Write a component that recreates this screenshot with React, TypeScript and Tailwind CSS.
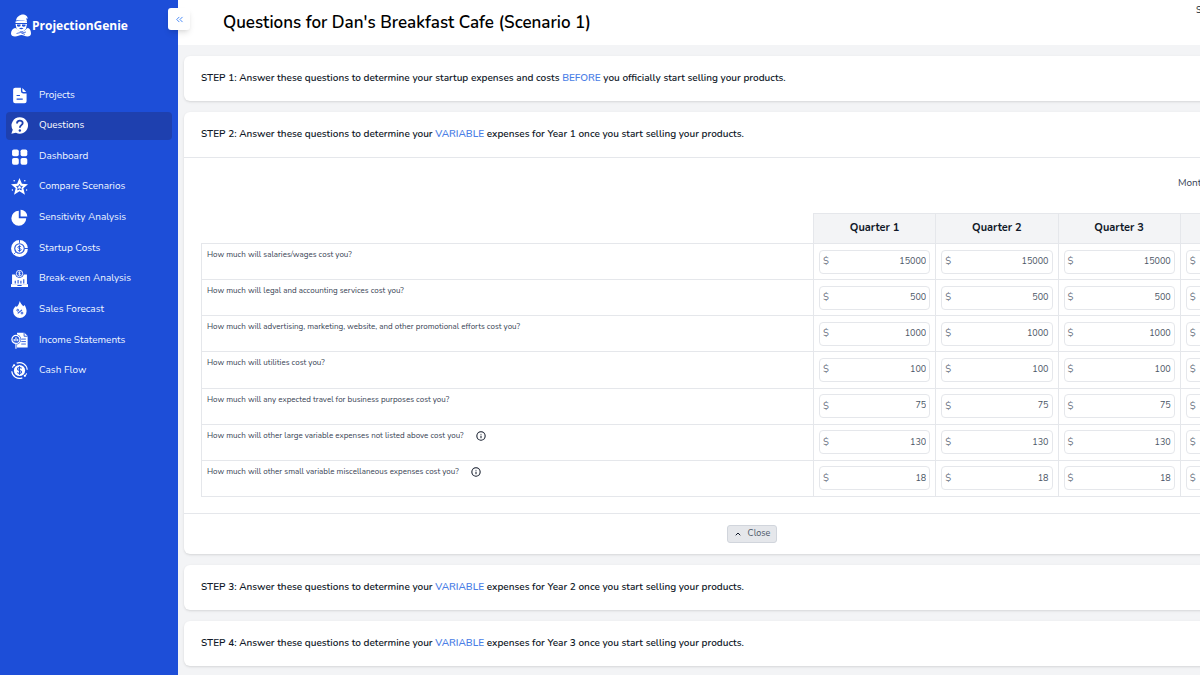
import type { ReactNode } from "react"
import { ChevronUp, ChevronsLeft, Info } from "lucide-react"

const icons: Record<string, ReactNode> = {
  projects: (
    <>
      <path d="M6 1h8v5a3 3 0 0 0 3 3h5v11a3 3 0 0 1-3 3H6a3 3 0 0 1-3-3V4a3 3 0 0 1 3-3z" />
      <path d="M16 1.500l5.500 5.500H17.500A1.500 1.500 0 0 1 16 5.500z" />
      <path d="M8.500 12h3.500M8.500 17h7.500" className="stroke-[#1d4ed8]" strokeWidth="1.700" strokeLinecap="round" />
    </>
  ),
  questions: (
    <>
      <path d="M12.500 0.500a11.500 11.500 0 1 1-5.500 21.600L0.500 23.500 2.500 18A11.500 11.500 0 0 1 12.500 0.500z" />
      <path
        d="M8.500 9c0-5 8-5 8-.5 0 3-4 3-4 6.500"
        className="stroke-[#1e40af]"
        strokeWidth="2.600"
        fill="none"
      />
      <circle cx="12.500" cy="19" r="1.700" className="fill-[#1e40af]" />
    </>
  ),
  dashboard: (
    <>
      <rect x="1.500" y="2" width="9.500" height="9.500" rx="2.500" />
      <rect x="13.500" y="2" width="9.500" height="9.500" rx="2.500" />
      <rect x="1.500" y="14" width="9.500" height="9.500" rx="2.500" />
      <rect x="13.500" y="14" width="9.500" height="9.500" rx="2.500" />
    </>
  ),
  compare: (
    <>
      <path d="M12 0l3.400 8.200 8.600.6-6.600 5.600 2.300 9.100L12 18.700l-7.700 4.800 2.300-9.100L0 8.800l8.600-.6z" />
      <path
        d="M12 9l1.200 2.700 2.900.3-2.200 2 .6 2.900L12 15.400l-2.500 1.500.6-2.900-2.200-2 2.900-.3z"
        className="stroke-[#1d4ed8]"
        strokeWidth="1.300"
        fill="none"
      />
      <circle cx="4.500" cy="4" r="1.100" />
      <circle cx="19.500" cy="4" r="1.100" />
      <circle cx="22" cy="17" r="1" />
      <circle cx="2" cy="17" r="1" />
    </>
  ),
  sensitivity: (
    <>
      <path d="M11 2.500v10.500h10.500A10.500 10.500 0 1 1 11 2.500z" />
      <path d="M13.500 1a9.500 9.500 0 0 1 9.500 9.500h-9.500z" />
    </>
  ),
  startup: (
    <>
      <circle cx="12" cy="12" r="9.700" fill="none" stroke="currentColor" strokeWidth="4.400" />
      <circle cx="12" cy="12" r="5.900" />
      <path d="M12 0v4M19 12h5M4.500 19.500l2-2" className="stroke-[#1d4ed8]" strokeWidth="1.300" />
      <path
        d="M14.300 9.700c-1-1.300-4.600-1.200-4.600.7 0 2.100 4.700 1.100 4.700 3.300 0 1.900-3.700 2-4.800.5M12 7.500v9"
        className="stroke-[#1d4ed8]"
        strokeWidth="1.300"
        fill="none"
      />
    </>
  ),
  breakEven: (
    <>
      <path d="M1.500 6.500h4.500a6.200 6.200 0 0 0 12 0h4.500V20h-21z" />
      <path d="M0 20h24v4H0z" />
      <circle cx="12" cy="5" r="4.500" fill="none" stroke="currentColor" strokeWidth="1.300" />
      <path d="M13.500 3.600c-1-1-3-.7-3 .4 0 1.500 3 .8 3 2.200 0 1-2.200 1.200-3.200.2M12 2v6" fill="none" stroke="currentColor" />
      <path d="M6 19v-4M10 19v-5M14 19v-4M18 19v-6M9 21.800h6" className="stroke-[#1d4ed8]" strokeWidth="1.500" />
    </>
  ),
  sales: (
    <>
      <path d="M12.500 0c1 4 3 5 5 7.500l1.500-2c2 3 3 6 3 9A9.500 9.500 0 0 1 3 14.500c0-4 2-5.500 4-7.500l1 1.500C10.500 6 11.500 3 12.500 0z" />
      <path d="M9.500 17.500l6-5" className="stroke-[#1d4ed8]" strokeWidth="1.500" />
      <circle cx="9.500" cy="13" r="1.300" className="stroke-[#1d4ed8]" fill="none" strokeWidth="1.300" />
      <circle cx="15.500" cy="17" r="1.300" className="stroke-[#1d4ed8]" fill="none" strokeWidth="1.300" />
    </>
  ),
  income: (
    <>
      <path d="M8.500 1h10.500l4.500 4.500V22H8.500z" />
      <path
        d="M18.500 1v5h5M14.500 10H21M14.500 13.500H21M14.500 17H21"
        className="stroke-[#1d4ed8]"
        strokeWidth="1.200"
        fill="none"
      />
      <circle cx="7" cy="10.500" r="7.300" className="fill-[#1d4ed8]" />
      <circle cx="7" cy="10.500" r="5.700" fill="none" stroke="currentColor" strokeWidth="1.800" />
      <path d="M4.500 13v-3M7 13V7.500M9.500 13V9.500M7 16.500v7" stroke="currentColor" strokeWidth="1.600" />
    </>
  ),
  cash: (
    <>
      <circle cx="12" cy="12" r="7.900" />
      <path
        d="M15 8.900c-1.500-1.600-5.800-1.400-5.800 1 0 2.700 5.800 1.400 5.800 4.200 0 2.400-4.600 2.500-6.200.7M12 6v12"
        className="stroke-[#1d4ed8]"
        strokeWidth="1.500"
        fill="none"
      />
      <path
        d="M8 1.600A11 11 0 0 1 22.900 11M16 22.400A11 11 0 0 1 1.100 13M2 8a11 11 0 0 1 2.500-4M22 16a11 11 0 0 1-2.500 4"
        fill="none"
        stroke="currentColor"
        strokeWidth="1.600"
      />
      <circle cx="4.500" cy="4.500" r="1.500" />
      <circle cx="19.500" cy="19.500" r="1.500" />
    </>
  ),
}

const navItems = [
  { name: "Projects", icon: "projects" },
  { name: "Questions", icon: "questions", active: true },
  { name: "Dashboard", icon: "dashboard" },
  { name: "Compare Scenarios", icon: "compare" },
  { name: "Sensitivity Analysis", icon: "sensitivity" },
  { name: "Startup Costs", icon: "startup" },
  { name: "Break-even Analysis", icon: "breakEven" },
  { name: "Sales Forecast", icon: "sales" },
  { name: "Income Statements", icon: "income" },
  { name: "Cash Flow", icon: "cash" },
]

const quarters = ["Quarter 1", "Quarter 2", "Quarter 3", "Quarter 4"]

const questions = [
  { text: "How much will salaries/wages cost you?", value: 15000 },
  { text: "How much will legal and accounting services cost you?", value: 500 },
  { text: "How much will advertising, marketing, website, and other promotional efforts cost you?", value: 1000 },
  { text: "How much will utilities cost you?", value: 100 },
  { text: "How much will any expected travel for business purposes cost you?", value: 75 },
  { text: "How much will other large variable expenses not listed above cost you?", value: 130, info: true },
  { text: "How much will other small variable miscellaneous expenses cost you?", value: 18, info: true },
]

const Logo = () => (
  <a href="#" className="flex items-center gap-px pl-[11px] text-white">
    <svg viewBox="0 0 40 46" className="h-[23px] w-5" fill="currentColor" aria-hidden="true">
      <path d="M10 13C11 5 19 0 26 1c5 1 8 5 7 9l-3-2c1 3 2 5 2 7-7-3-15-3-22-2z" />
      <path d="M9 15c7-3 16-3 23 0v3H9z" />
      <path d="M9 20h23l-2 9c-2 4-6 6-9.500 6S12 33 11 29z" />
      <path
        d="M12 21h7v3c-2 2-5 2-7 0zM22 21h7v3c-2 2-5 2-7 0zM16 29c3-2 6-2 9 0-3 2-6 2-9 0z"
        className="fill-[#1d4ed8]"
      />
      <path d="M8 28c3 0 4 3 7 5l6 4 6-4c3-2 4-5 7-5 4 1 6 6 6 11 0 4-3 6-7 6-5 0-8-3-12-3s-8 3-13 3c-5 0-8-2-8-6 0-5 3-10 8-11z" />
      <path d="M11 39l8-2 9 4M22 38l8-2" className="stroke-[#1d4ed8]" strokeWidth="1.500" fill="none" />
    </svg>
    <span className="font-['Open_Sans',sans-serif] text-[12px] font-bold">ProjectionGenie</span>
  </a>
)

const Sidebar = () => (
  <aside className="relative w-[178px] shrink-0 bg-[#1d4ed8] pt-3.5">
    <Logo />
    <button
      aria-label="Collapse menu"
      className="absolute top-2 -right-3 z-10 flex size-[22px] items-center justify-center rounded-[3px] bg-white text-[#3b82f6] shadow-md"
    >
      <ChevronsLeft size={11} />
    </button>
    <nav className="mt-11 flex h-[304px] flex-col justify-between px-1.5">
      {navItems.map((item) => (
        <a
          key={item.name}
          href="#"
          className={`flex h-7 items-center gap-[11px] rounded-[4px] pl-[5px] text-[10px] ${
            item.active ? "bg-[#1e40af] text-white" : "text-blue-50"
          }`}
        >
          <svg viewBox="0 0 24 24" className="size-[17px] text-white" fill="currentColor" aria-hidden="true">
            {icons[item.icon]}
          </svg>
          {item.name}
        </a>
      ))}
    </nav>
  </aside>
)

const Card = ({ title, children }: { title: ReactNode; children?: ReactNode }) => (
  <section className="rounded-md bg-white shadow">
    <h2 className="flex h-[45px] items-center px-[17px] text-[10px] font-semibold text-gray-900">
      <span>{title}</span>
    </h2>
    {children}
  </section>
)

const Keyword = ({ children }: { children: ReactNode }) => <span className="text-[#4a7ee6]">{children}</span>

const variableTitle = (step: number, year: number) => (
  <>
    STEP {step}: Answer these questions to determine your <Keyword>VARIABLE</Keyword> expenses for Year {year} once you
    start selling your products.
  </>
)

const MoneyInput = ({ label, value }: { label: string; value: number }) => (
  <label className="flex h-6 items-center rounded-[4px] border border-gray-200 px-[3px] text-gray-500">
    <span className="text-[10px]">$</span>
    <input
      aria-label={label}
      defaultValue={value}
      className="w-full min-w-0 bg-transparent text-right text-[9px] text-gray-600 outline-none"
    />
  </label>
)

const ExpensesTable = () => (
  <table className="h-[284px] w-full table-fixed border-collapse">
    <thead>
      <tr className="h-[30px]">
        <th className="w-[612px]"></th>
        {quarters.map((quarter) => (
          <th key={quarter} className="border border-gray-200 bg-gray-100 text-[11px] font-bold text-gray-900">
            {quarter}
          </th>
        ))}
      </tr>
    </thead>
    <tbody>
      {questions.map((question) => (
        <tr key={question.text}>
          <td className="border border-gray-200 px-[5px] pt-[3px] align-top text-[8px] text-gray-700">
            <div className="flex h-4 items-center gap-3">
              {question.text}
              {question.info && <Info size={10} strokeWidth={2.5} className="text-gray-900" />}
            </div>
          </td>
          {quarters.map((quarter) => (
            <td key={quarter} className="border border-gray-200 px-[5px]">
              <MoneyInput label={`${question.text} ${quarter}`} value={question.value} />
            </td>
          ))}
        </tr>
      ))}
    </tbody>
  </table>
)

export default function App() {
  return (
    <div className="flex h-screen overflow-hidden bg-gray-100 font-['Nunito','Open_Sans',sans-serif]">
      <Sidebar />
      <main className="min-w-0 flex-1 overflow-hidden">
        <div className="min-w-[1147px]">
          <header className="flex h-[45px] items-center justify-between bg-white pl-[45px]">
            <h1 className="text-[17px] font-semibold text-black">Questions for Dan's Breakfast Cafe (Scenario 1)</h1>
            <span className="w-[129px] self-start pt-1 text-[9px] text-gray-900">Scenario</span>
          </header>
          <div className="flex flex-col gap-[11px] pt-[11px] pr-[5px] pl-1.5">
            <Card
              title={
                <>
                  STEP 1: Answer these questions to determine your startup expenses and costs <Keyword>BEFORE</Keyword>{" "}
                  you officially start selling your products.
                </>
              }
            />
            <Card title={variableTitle(2, 1)}>
              <div className="border-y border-gray-200 px-[17px] pt-[15px] pb-4">
                <div className="mb-5 flex h-5 items-center justify-end text-[10px] text-gray-700">
                  <span className="w-[125px]">Monthly</span>
                </div>
                <ExpensesTable />
              </div>
              <div className="flex h-10 items-center justify-center">
                <button className="flex h-[18px] items-center gap-1.5 rounded-[3px] border border-gray-300 bg-gray-200 px-1.5 text-[9px] text-gray-600">
                  <ChevronUp size={8} strokeWidth={3} className="text-gray-900" />
                  Close
                </button>
              </div>
            </Card>
            <Card title={variableTitle(3, 2)} />
            <Card title={variableTitle(4, 3)} />
          </div>
        </div>
      </main>
    </div>
  )
}
